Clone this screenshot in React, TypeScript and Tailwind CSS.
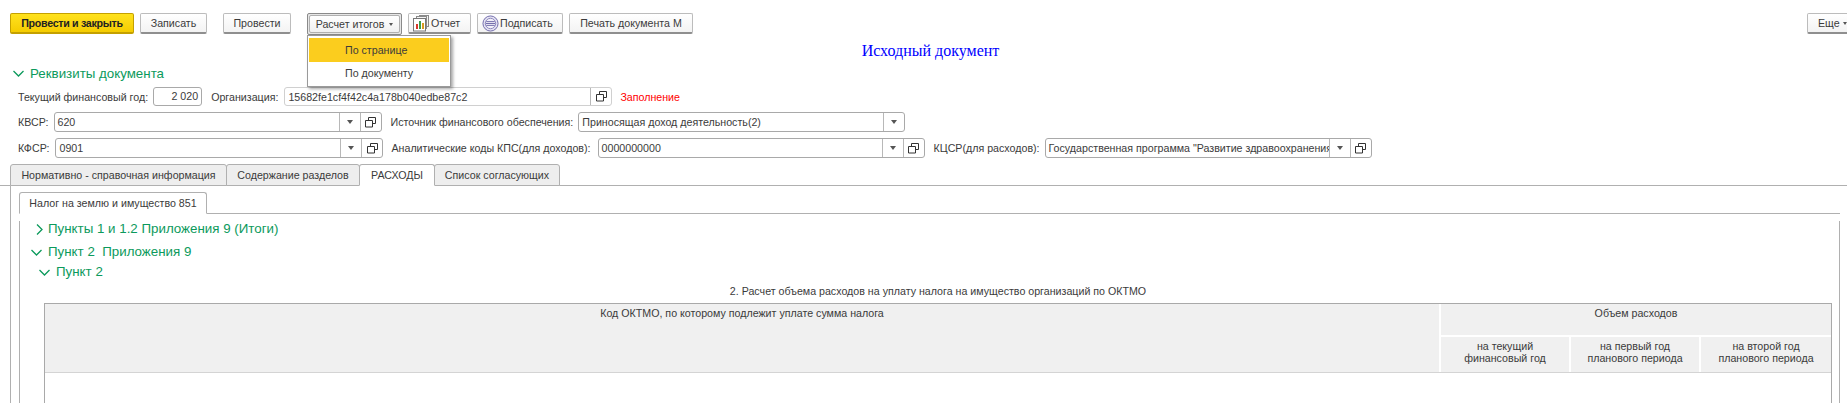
import React from "react";

function Chevron({ dir }: { dir: "down" | "right" }) {
  return (
    <svg width="13" height="13" viewBox="0 0 13 13" className="shrink-0" fill="none" stroke="#0c9a5c" strokeWidth="1.3">
      {dir === "down" ? <path d="M1.5 4 L6.5 9 L11.5 4" /> : <path d="M4 1.5 L9 6.5 L4 11.5" />}
    </svg>
  );
}

function OpenIcon() {
  return (
    <svg width="11" height="11" viewBox="0 0 11 11" fill="none" stroke="#333" strokeWidth="1">
      <path d="M3.5 3 V0.5 H10.5 V6.5 H8" />
      <path d="M0.5 3.5 H7.5 V10 H0.5 Z" />
    </svg>
  );
}

function Caret() {
  return <span className="w-0 h-0 border-x-[3.5px] border-x-transparent border-t-[4px] border-t-[#555]" />;
}

function Btn({ children, w, cls }: { children: React.ReactNode; w: string; cls?: string }) {
  return (
    <div className={"h-[21px] flex items-center rounded-[2px] border border-[#bcbcbc] border-b-[#8f8f8f] border-b-2 bg-gradient-to-b from-white to-[#f3f3f3] text-[#3b3b3b] whitespace-nowrap shrink-0 " + w + " " + (cls ?? "justify-center")}>
      {children}
    </div>
  );
}

function Field({ w, value, select, open, cls }: { w: string; value: string; select?: boolean; open?: boolean; cls?: string }) {
  return (
    <div className={"flex items-stretch rounded-[3px] border bg-white shrink-0 " + w + " " + (cls ?? "h-[20px] border-[#a9a9a9]")}>
      <div className="flex-1 min-w-0 overflow-hidden whitespace-nowrap pl-[3px] leading-[18px] text-[#3b3b3b]">{value}</div>
      {select && (
        <div className="w-[21px] border-l border-[#b8b8b8] flex items-center justify-center"><Caret /></div>
      )}
      {open && (
        <div className="w-[21px] border-l border-[#b8b8b8] flex items-center justify-center"><OpenIcon /></div>
      )}
    </div>
  );
}

function Tab({ w, active, children }: { w: string; active?: boolean; children: React.ReactNode }) {
  return (
    <div className={"h-[22px] flex items-center justify-center border border-[#b0b0b0] rounded-t-[3px] -mr-px whitespace-nowrap text-[#3b3b3b] " + w + " " + (active ? "bg-white border-b-white z-10" : "bg-[#eeeeee]")}>
      {children}
    </div>
  );
}

function ReportIcon() {
  return (
    <svg width="17" height="17" viewBox="0 0 17 17" className="mr-[1px]" fill="none">
      <rect x="6.5" y="0.5" width="9" height="11" fill="#f4f4f4" stroke="#8a8a8a" />
      <rect x="3.5" y="1.5" width="10" height="12" fill="#f4f4f4" stroke="#8a8a8a" />
      <rect x="0.5" y="3.5" width="12" height="12.5" fill="#fff" stroke="#777" />
      <rect x="3" y="9" width="2" height="5" fill="#d8382b" />
      <rect x="6" y="6" width="2" height="8" fill="#3aa04a" />
      <rect x="9" y="8" width="2" height="6" fill="#d89a20" />
    </svg>
  );
}

function SignIcon() {
  return (
    <svg width="17" height="17" viewBox="0 0 18 18" className="mr-[1px]" fill="none">
      <circle cx="9" cy="9" r="8" fill="#e4e2f2" stroke="#6c66a8" />
      <circle cx="9" cy="9" r="5.5" fill="#f1f0f8" stroke="#8a85bb" />
      <path d="M4.5 7 H13.5 M4 9 H14 M4.5 11 H13.5" stroke="#6c66a8" />
    </svg>
  );
}

export default function App() {
  return (
    <div className="relative w-[1847px] h-[403px] overflow-hidden bg-white text-[10.67px] leading-[14px] text-[#3b3b3b]" style={{ fontFamily: '"Liberation Sans", Arial, sans-serif' }}>
      {/* toolbar */}
      <div className="flex items-start pt-[13px] pl-[10px] h-[34px]">
        <div className="w-[124px] h-[21px] flex items-center justify-center rounded-[2px] border border-[#c4a000] border-b-2 bg-gradient-to-b from-[#ffe21c] to-[#f5cc00] font-bold tracking-[-0.3px] text-[#222] whitespace-nowrap">Провести и закрыть</div>
        <Btn w="w-[67px] ml-[6px]">Записать</Btn>
        <Btn w="w-[68px] ml-[16px]">Провести</Btn>
        <div className="w-[95px] h-[22px] ml-[16px] border border-[#8a8a8a] rounded-[2px] bg-[#e6e6e6] p-[1px] shrink-0">
          <div className="h-full flex items-center justify-center gap-[5px] rounded-[2px] border border-[#b0b0b0] bg-gradient-to-b from-white to-[#f0f0f0] whitespace-nowrap">Расчет итогов<span className="w-0 h-0 border-x-[2.5px] border-x-transparent border-t-[3px] border-t-[#555]" /></div>
        </div>
        <Btn w="w-[63px] ml-[6px] pl-[4px]" cls="justify-start"><ReportIcon />Отчет</Btn>
        <Btn w="w-[86px] ml-[6px] pl-[4px]" cls="justify-start"><SignIcon />Подписать</Btn>
        <Btn w="w-[124px] ml-[6px]">Печать документа М</Btn>
        <div className="ml-auto w-[40px]">
          <Btn w="w-[48px] pl-[10px]" cls="justify-start"><span className="flex items-center gap-[3px] whitespace-nowrap">Еще<span className="w-0 h-0 border-x-[2.5px] border-x-transparent border-t-[3px] border-t-[#555]" /></span></Btn>
        </div>
      </div>

      {/* dropdown */}
      <div className="absolute left-[307px] top-[35px] w-[144px] h-[52px] bg-white border border-[#9a9a9a] shadow-[2px_2px_3px_rgba(0,0,0,0.35)] p-[1px] z-20">
        <div className="h-[24px] mt-[1px] bg-[#fbcd1e] flex items-center pl-[36px]">По странице</div>
        <div className="h-[22px] flex items-center pl-[36px]">По документу</div>
      </div>

      {/* title */}
      <div className="h-[32px] flex justify-center pt-[8px] text-[16px] leading-[18px] text-[#0000ff] pl-[14px]" style={{ fontFamily: '"Liberation Serif", "Times New Roman", serif' }}>Исходный документ</div>

      {/* group header */}
      <div className="flex items-center h-[15px] pl-[12px] text-[13.33px] text-[#0c9a5c]">
        <Chevron dir="down" />
        <span className="ml-[5px]">Реквизиты документа</span>
      </div>

      <div className="flex items-center h-[19px] mt-[6px] pl-[18px]">
        <span>Текущий финансовый год:</span>
        <div className="ml-[5px] w-[49px] h-[19px] border border-[#a9a9a9] rounded-[3px] text-right pr-[3px] leading-[17px]">2 020</div>
        <span className="ml-[9px]">Организация:</span>
        <Field w="w-[328px] ml-[6px]" cls="h-[19px] border-[#d0d0d0]" value="15682fe1cf4f42c4a178b040edbe87c2" open />
        <span className="ml-[8px] text-[#ff0000]">Заполнение</span>
      </div>

      <div className="flex items-center h-[20px] mt-[6px] pl-[18px]">
        <span>КВСР:</span>
        <Field w="w-[328px] ml-[5px]" value="620" select open />
        <span className="ml-[9px]">Источник финансового обеспечения:</span>
        <Field w="w-[327px] ml-[5px]" value="Приносящая доход деятельность(2)" select />
      </div>

      <div className="flex items-center h-[20px] mt-[6px] pl-[18px]">
        <span>КФСР:</span>
        <Field w="w-[328px] ml-[6px]" value="0901" select open />
        <span className="ml-[8px]">Аналитические коды КПС(для доходов):</span>
        <Field w="w-[327px] ml-[7px]" value="0000000000" select open />
        <span className="ml-[9px]">КЦСР(для расходов):</span>
        <Field w="w-[327px] ml-[5px]" value={'Государственная программа "Развитие здравоохранения'} select open />
      </div>

      {/* outer tabs */}
      <div className="flex pl-[10px] mt-[6px] border-b border-[#b0b0b0] h-[22px]">
        <Tab w="w-[217px]">Нормативно - справочная информация</Tab>
        <Tab w="w-[134px]">Содержание разделов</Tab>
        <Tab w="w-[76px]" active>РАСХОДЫ</Tab>
        <Tab w="w-[126px]">Список согласующих</Tab>
      </div>

      {/* outer panel */}
      <div className="ml-[10px] h-[217px] border-l border-[#b0b0b0] pl-[8px] pt-[6px]">
        <div className="flex h-[22px] border-b border-[#b0b0b0] mr-[7px]">
          <div className="w-[188px] h-[22px] bg-white border border-[#b0b0b0] border-b-white rounded-t-[3px] flex items-center justify-center whitespace-nowrap">Налог на землю и имущество 851</div>
        </div>
        <div className="h-[200px] mr-[7px] border-x border-[#b0b0b0]">
          <div className="flex items-center h-[16px] mt-[7px] pl-[13px] text-[13.33px] text-[#0c9a5c]">
            <Chevron dir="right" />
            <span className="ml-[2px]">Пункты 1 и 1.2 Приложения 9 (Итоги)</span>
          </div>
          <div className="flex items-center h-[16px] mt-[7px] pl-[10px] text-[13.33px] text-[#0c9a5c]">
            <Chevron dir="down" />
            <span className="ml-[5px] whitespace-pre">Пункт 2  Приложения 9</span>
          </div>
          <div className="flex items-center h-[16px] mt-[4px] pl-[18px] text-[13.33px] text-[#0c9a5c]">
            <Chevron dir="down" />
            <span className="ml-[5px]">Пункт 2</span>
          </div>
          <div className="text-center h-[14px] mt-[4px] pl-[17px] whitespace-nowrap">2. Расчет объема расходов на уплату налога на имущество организаций по ОКТМО</div>
          {/* table */}
          <div className="ml-[24px] mr-[7px] mt-[5px] h-[120px] border border-b-0 border-[#a9a9a9]">
            <div className="grid grid-cols-[1396px_130px_130px_130px] grid-rows-[33px_35px] bg-[#f0f0f0] border-b border-[#d4d4d4]">
              <div className="row-span-2 border-r-2 border-white text-center pt-[2px]">Код ОКТМО, по которому подлежит уплате сумма налога</div>
              <div className="col-span-3 border-b-2 border-white text-center pt-[2px]">Объем расходов</div>
              <div className="border-r-2 border-white text-center leading-[12px] pt-[3px]">на текущий<br />финансовый год</div>
              <div className="border-r-2 border-white text-center leading-[12px] pt-[3px]">на первый год<br />планового периода</div>
              <div className="text-center leading-[12px] pt-[3px]">на второй год<br />планового периода</div>
            </div>
          </div>
        </div>
      </div>
    </div>
  );
}
